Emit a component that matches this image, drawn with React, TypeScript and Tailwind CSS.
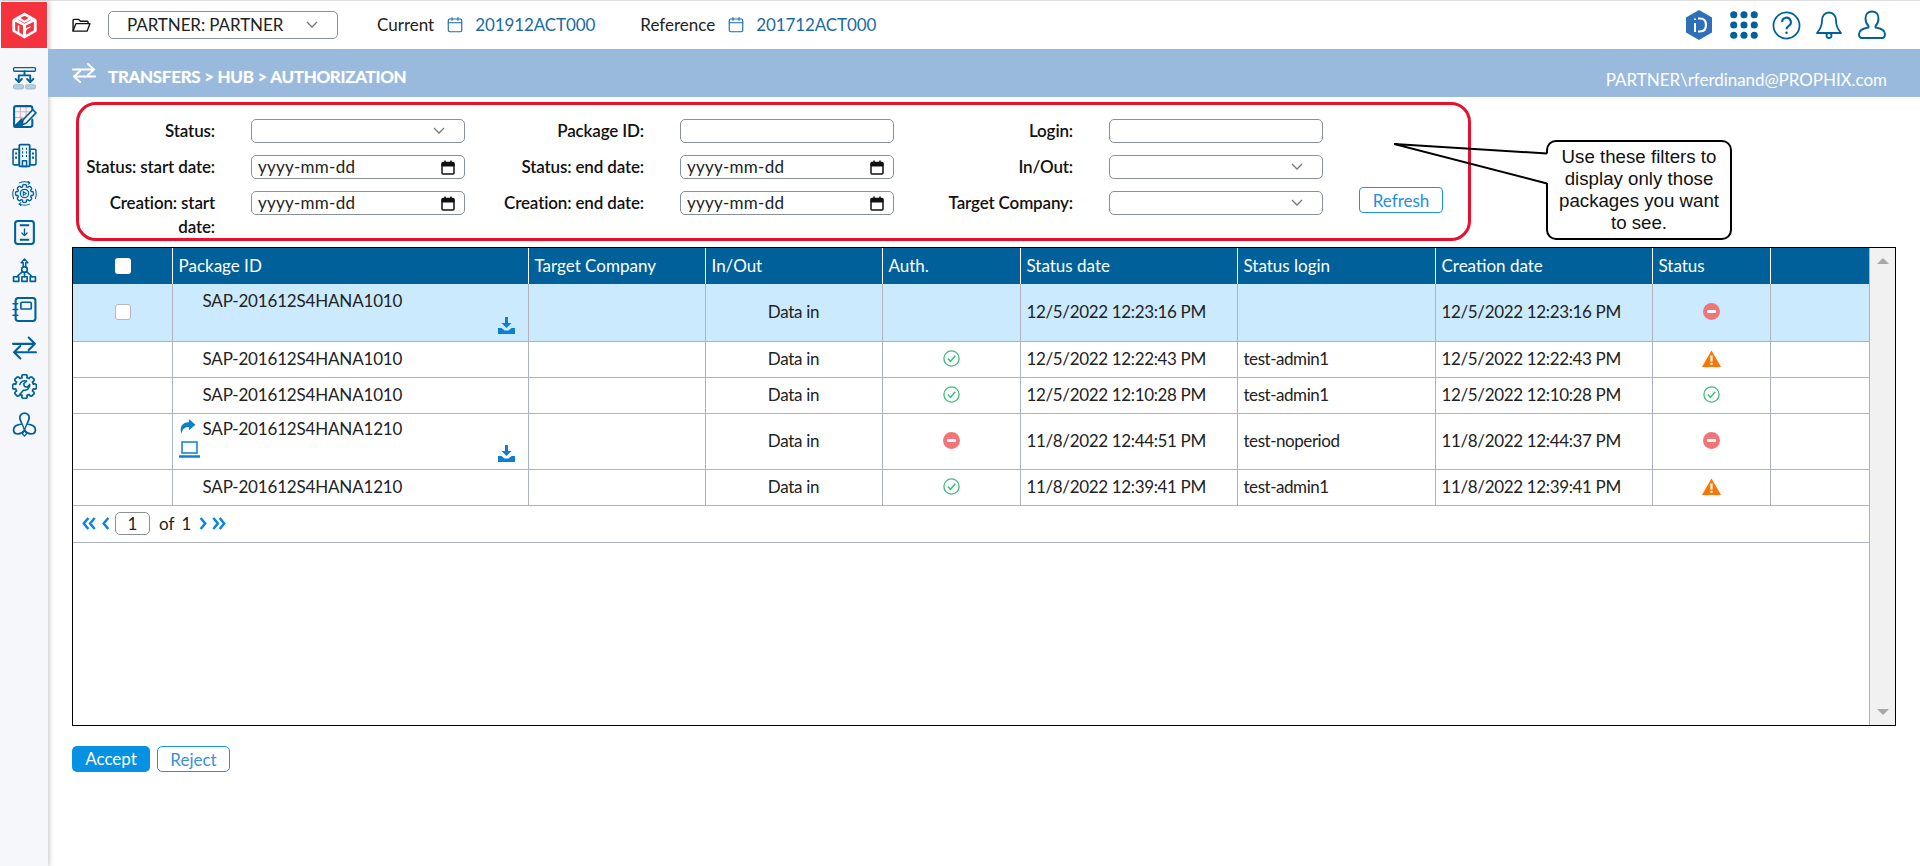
import React from "react";

const lato = { fontFamily: "Lato, 'Liberation Sans', sans-serif" };

function Svg({ className, children }: { className?: string; children: React.ReactNode }) {
  return (
    <svg viewBox="0 0 24 24" fill="none" stroke="currentColor" strokeWidth="1.5" strokeLinecap="round" strokeLinejoin="round" className={className}>
      {children}
    </svg>
  );
}

// outline of a cog, used by the two gear icons of the side bar
function gearPath(cx: number, cy: number, outer: number, inner: number, teeth: number) {
  const pts: string[] = [];
  const step = (Math.PI * 2) / teeth;
  for (let i = 0; i < teeth; i++) {
    const a = i * step - Math.PI / 2;
    const at = (r: number, t: number) => `${(cx + r * Math.cos(a + t * step)).toFixed(2)} ${(cy + r * Math.sin(a + t * step)).toFixed(2)}`;
    pts.push(`${i === 0 ? "M" : "L"}${at(inner, -0.34)}`, `Q${at(outer, -0.34)} ${at(outer, -0.12)}`, `L${at(outer, 0.12)}`, `Q${at(outer, 0.34)} ${at(inner, 0.34)}`);
  }
  return pts.join(" ") + "z";
}

const sideIcons: React.ReactNode[] = [
  <>
    <rect x="1.500" y="1.500" width="21" height="3.500" rx="1" strokeWidth="1.300" />
    <path d="M12 5v4M6.500 9h11M6.500 9v6.500M17.500 9v6.500" strokeWidth="1.800" />
    <path d="M3.500 12.500l3 3 3-3M14.500 12.500l3 3 3-3" strokeWidth="1.800" />
    <rect x="1.500" y="18" width="9.500" height="4" rx="1.500" fill="#b7cfdf" stroke="#9db9cc" strokeWidth="1" />
    <rect x="13" y="18" width="9.500" height="4" rx="1.500" fill="#b7cfdf" stroke="#9db9cc" strokeWidth="1" />
  </>,
  <>
    <path d="M8 2v20M13.500 2v9M2 7.500h16M2 13h9" stroke="#e3a9b0" strokeWidth="1" strokeLinecap="butt" />
    <path d="M19.500 7V4a2 2 0 0 0-2-2H4a2 2 0 0 0-2 2v16a2 2 0 0 0 2 2h13.500a2 2 0 0 0 2-2v-5" strokeWidth="2" />
    <path d="M2 22l7.500-7.500V22z" fill="currentColor" />
    <path d="M9.500 20l1.200-5L20 5.500l3 3L13.500 18.500z" fill="#f6f7fb" strokeWidth="1.600" />
  </>,
  <>
    <rect x="7" y="1.500" width="10" height="21" rx="1" strokeWidth="1.700" />
    <rect x="1" y="6" width="6" height="15" rx="1" strokeWidth="1.500" />
    <rect x="17" y="6" width="6" height="15" rx="1" strokeWidth="1.500" />
    <path d="M10 17h4v5.500h-4z" />
    <path d="M9.500 5.500h1.200M13.300 5.500h1.200M9.500 9h1.200M13.300 9h1.200M9.500 12.500h1.200M13.300 12.500h1.200M3 10h1.800M3 14h1.800M19.200 10H21M19.200 14H21" strokeWidth="2" strokeLinecap="butt" />
  </>,
  <>
    <path d={gearPath(12, 12, 8.600, 6.700, 8)} strokeWidth="1.300" />
    <circle cx="12" cy="12" r="4" strokeWidth="1.200" />
    <path d="M10.800 10.200l3 1.800-3 1.800z" strokeWidth="1" />
    <path d="M7 1.800c3-1.200 7-1.200 10 0M22.500 8c1 3 1 6 0 9M1.500 8c-1 3-1 6 0 9M7 22.200c3 1.200 7 1.200 10 0M15.500 .5l1.800 1.300-1.800 1.300M8.500 20.900l-1.800 1.300 1.800 1.300" strokeWidth="1" />
  </>,
  <>
    <rect x="3" y="1" width="18" height="22" rx="2.500" strokeWidth="2" />
    <path d="M7.500 5h9M7.500 19h9" strokeWidth="2" strokeLinecap="butt" />
    <path d="M12 8.500v6M9.500 12.500l2.500 2.500 2.500-2.500" strokeWidth="1.300" />
  </>,
  <>
    <path d="M12 1L8.800 4.500h2V8.500h2.400V4.500h2z" strokeWidth="1.400" />
    <circle cx="12" cy="11" r="2.700" strokeWidth="1.600" />
    <path d="M12 13.700V18M10 13L4.500 18M14 13l5.500 5" strokeWidth="1.600" />
    <rect x="1.500" y="18" width="5" height="4.500" strokeWidth="1.600" />
    <rect x="9.500" y="18" width="5" height="4.500" strokeWidth="1.600" />
    <rect x="17.500" y="18" width="5" height="4.500" strokeWidth="1.600" />
  </>,
  <>
    <rect x="3.500" y="1" width="19" height="22" rx="2.500" strokeWidth="2" />
    <rect x="8.500" y="5" width="10" height="6.500" rx="1" strokeWidth="1.600" />
    <path d="M1 6.500h4.500M1 12h4.500M1 17.500h4.500" strokeWidth="1.500" />
  </>,
  <>
    <path d="M1 8.500h21M16 2.500l6 6-6 6M23 16.500H2M8 10.500l-6 6 6 6" strokeWidth="2" />
  </>,
  <>
    <path d={gearPath(12, 12, 11.500, 8.800, 8)} strokeWidth="1.700" />
    <path d="M7.500 10a5 5 0 0 1 6.500-3.200l-2.800 2.600.8 2.600 2.600.8L17 10a5 5 0 0 1-6 5.500l-3 3.500" strokeWidth="1.500" />
  </>,
  <>
    <path d="M12 1a4.500 4.500 0 0 0-4.500 4.500c0 2.500 1.500 4 2 6-3.500.5-8 2-8 5.700 0 2.500 2 3.800 4.500 3.800 2 0 4-1 6-3.500 2 2.500 4 3.500 6 3.500 2.500 0 4.500-1.300 4.500-3.800 0-3.700-4.500-5.200-8-5.700.5-2 2-3.500 2-6A4.500 4.500 0 0 0 12 1z" strokeWidth="1.700" />
    <path d="M10 12l2 5.500L14 12M12 17.500l-2 3.500 2 2 2-2z" strokeWidth="1.300" />
  </>,
];

function CalendarOutline() {
  return (
    <Svg className="w-[18px] h-[18px] text-[#1a6aa5]">
      <rect x="3" y="4" width="18" height="17" rx="2" />
      <path d="M3 9h18M8 2v3.500M16 2v3.500" />
    </Svg>
  );
}

function Chevron() {
  return (
    <svg viewBox="0 0 12 8" className="w-[12px] h-[8px] text-[#777]" fill="none" stroke="currentColor" strokeWidth="1.300">
      <path d="M1 1l5 5 5-5" />
    </svg>
  );
}

function FilterSelect() {
  return (
    <div className="h-6 rounded-[5px] border border-[#8a8f9c] bg-white flex items-center justify-end pr-[19px]">
      <Chevron />
    </div>
  );
}

function FilterInput() {
  return <div className="h-6 rounded-[5px] border border-[#8a8f9c] bg-white" />;
}

function FilterDate() {
  return (
    <div className="h-6 rounded-[5px] border border-[#8a8f9c] bg-white flex items-center justify-between pl-[6px] pr-[9px] text-[#222] tracking-[0.25px]">
      <span className="-mt-px">yyyy-mm-dd</span>
      <svg viewBox="0 0 14 15" className="w-[14px] h-[15px]" fill="none" stroke="#111">
        <rect x="1" y="2.500" width="12" height="11.500" rx="1" strokeWidth="1.500" />
        <path d="M1 3.500h12v2.500H1z" fill="#111" />
        <path d="M4 0.500v2M10 0.500v2" strokeWidth="1.500" />
      </svg>
    </div>
  );
}

function Label({ children }: { children: React.ReactNode }) {
  return <div className="text-right font-semibold text-[#111] tracking-[-0.15px] leading-6">{children}</div>;
}

function Download() {
  return (
    <svg viewBox="0 0 17 17" className="w-[17px] h-[17px] text-[#0b7fd0]" fill="currentColor">
      <path d="M7 0h3v6h3.500L8.500 11 3.500 6H7z" />
      <path d="M0 11h3.500l3 2.500h4l3-2.500H17v6H0z" />
    </svg>
  );
}

function CheckOk() {
  return (
    <svg viewBox="0 0 17 17" className="w-[17px] h-[17px] mx-auto -mt-[2px] block" fill="none" stroke="#3dbb78" strokeWidth="1.300">
      <circle cx="8.500" cy="8.500" r="7.600" />
      <path d="M4.800 8.600l2.700 2.800 4.700-5.600" strokeWidth="1.500" />
    </svg>
  );
}

function Stop() {
  return (
    <svg viewBox="0 0 17 17" className="w-[17px] h-[17px] mx-auto -mt-[2px] block">
      <circle cx="8.500" cy="8.500" r="8.500" fill="#f07478" />
      <rect x="4" y="7" width="9" height="3" rx="1" fill="#fff" />
    </svg>
  );
}

function Warn() {
  return (
    <svg viewBox="0 0 19 17" className="w-[19px] h-[17px] mx-auto -mt-[2px] block">
      <path d="M9.500 0.500L19 17H0z" fill="#ff7300" />
      <rect x="8.400" y="5.500" width="2.200" height="6" fill="#fff" />
      <rect x="8.400" y="12.800" width="2.200" height="2.200" fill="#fff" />
    </svg>
  );
}

type Row = {
  height: string;
  check?: boolean;
  mine?: boolean;
  id: string;
  auth?: "ok" | "stop";
  statusDate: string;
  login: string;
  created: string;
  status: "ok" | "stop" | "warn";
  selected?: boolean;
};

const rows: Row[] = [
  { height: "h-[57px]", check: true, selected: true, id: "SAP-201612S4HANA1010", statusDate: "12/5/2022 12:23:16 PM", login: "", created: "12/5/2022 12:23:16 PM", status: "stop" },
  { height: "h-[36px]", id: "SAP-201612S4HANA1010", auth: "ok", statusDate: "12/5/2022 12:22:43 PM", login: "test-admin1", created: "12/5/2022 12:22:43 PM", status: "warn" },
  { height: "h-[36px]", id: "SAP-201612S4HANA1010", auth: "ok", statusDate: "12/5/2022 12:10:28 PM", login: "test-admin1", created: "12/5/2022 12:10:28 PM", status: "ok" },
  { height: "h-[56px]", mine: true, id: "SAP-201612S4HANA1210", auth: "stop", statusDate: "11/8/2022 12:44:51 PM", login: "test-noperiod", created: "11/8/2022 12:44:37 PM", status: "stop" },
  { height: "h-[36px]", id: "SAP-201612S4HANA1210", auth: "ok", statusDate: "11/8/2022 12:39:41 PM", login: "test-admin1", created: "11/8/2022 12:39:41 PM", status: "warn" },
];

function StatusIcon({ s }: { s?: "ok" | "stop" | "warn" }) {
  if (s === "ok") return <CheckOk />;
  if (s === "stop") return <Stop />;
  if (s === "warn") return <Warn />;
  return null;
}

const headers = ["Package ID", "Target Company", "In/Out", "Auth.", "Status date", "Status login", "Creation date", "Status", ""];
const td = "border-r border-b border-[#aeb1bf] px-[6px] align-middle";

function Pager() {
  return (
    <div className="h-[37px] flex items-center pl-[9px] text-[#222] border-b border-[#aeb1bf]">
      <svg viewBox="0 0 32 14" className="w-[29px] h-[13px] text-[#0b86dc]" fill="none" stroke="currentColor" strokeWidth="2.800">
        <path d="M7 1L2 7l5 6M14 1L9 7l5 6M29 1l-5 6 5 6" />
      </svg>
      <div className="w-[35px] h-[23px] ml-[4px] rounded-[5px] border border-[#8a8f9c] flex items-center justify-center">1</div>
      <span className="ml-[9px]">of</span>
      <span className="ml-[7px]">1</span>
      <svg viewBox="0 0 32 14" className="w-[29px] h-[13px] ml-[6px] text-[#0b86dc]" fill="none" stroke="currentColor" strokeWidth="2.800">
        <path d="M4 1l5 6-5 6M18 1l5 6-5 6M25 1l5 6-5 6" />
      </svg>
    </div>
  );
}

export default function App() {
  return (
    <div className="relative w-[1920px] h-[866px] overflow-hidden bg-white text-[17px]" style={lato}>
      <div className="h-px bg-[#dfdfdf]" />
      <div className="flex h-[865px]">
        <aside className="w-[48px] shrink-0 bg-[#f6f7fb] shadow-[2px_0_4px_rgba(0,0,0,0.18)]">
          <div className="ml-px mt-px w-[46px] h-[46px] bg-[#f4333f] flex items-center justify-center">
            <svg viewBox="0 0 24 26" className="w-[25px] h-[27px]" fill="#fff">
              <path d="M12 .5l10.500 6c.8.5 1.200 1 1.200 2v9c0 1-.4 1.500-1.200 2l-10.500 6-10.500-6C.7 19 .3 18.500.3 17.500v-9c0-1 .4-1.500 1.200-2z" />
              <path d="M12 3.500L8 5.800l4 2.400 4-2.400zM6 7.200l-.5.300 6.500 3.700 6.500-3.700-.5-.300-6 3.400z" fill="#f4333f" />
              <path d="M3 9.500v8l2.500 1.400v-5.400c0-1 1.500-1 1.500 0v6.300l3.500 2V13zM21 9.500v8l-7.500 4.300V18.500c0-1 1-2 2.500-2.600 1.500-.7 2-1 2-2.400-2 1-3.500 1.500-4.500 2.400V13z" fill="#f4333f" />
            </svg>
          </div>
          <div className="mt-[11px] flex flex-col items-center text-[#00619a]">
            {sideIcons.map((icon, i) => (
              <div key={i} className="h-[38.500px] flex items-center justify-center">
                <Svg className="w-[25px] h-[25px]">{icon}</Svg>
              </div>
            ))}
          </div>
        </aside>

        <main className="flex-1 min-w-0">
          <header className="h-[48px] flex items-center pl-6 pr-[33px] text-[#222]">
            <svg viewBox="0 0 20 16" className="w-[19px] h-[15px]" fill="none" stroke="#111" strokeWidth="1.500" strokeLinejoin="round">
              <path d="M1 14V2.500a1 1 0 0 1 1-1h5l2 2h7a1 1 0 0 1 1 1V6" />
              <path d="M1 14l3-8h15l-3 8z" />
            </svg>
            <div className="ml-[17px] w-[230px] h-[28px] rounded-[5px] border border-[#8a8f9c] flex items-center justify-between pl-[18px] pr-[19px] tracking-[-0.1px]">
              <span>PARTNER: PARTNER</span>
              <Chevron />
            </div>
            <span className="ml-[39px]">Current</span>
            <span className="ml-[12px]"><CalendarOutline /></span>
            <span className="ml-[11px] text-[#1a6aa5] tracking-[-0.1px]">201912ACT000</span>
            <span className="ml-[45px]">Reference</span>
            <span className="ml-[12px]"><CalendarOutline /></span>
            <span className="ml-[11px] text-[#1a6aa5] tracking-[-0.1px]">201712ACT000</span>

            <div className="ml-auto flex items-center text-[#00619a]">
              <svg viewBox="0 0 26 30" className="w-[26px] h-[30px]">
                <path d="M13 0l13 7.500v15L13 30 0 22.500v-15z" fill="#2d6fb8" />
                <path d="M9 13v9M9 8.500v1.500" stroke="#fff" strokeWidth="2" fill="none" />
                <path d="M12 8.500h2c4 0 6 2.500 6 6.500s-2 6.500-6 6.500h-2" stroke="#fff" strokeWidth="2.200" fill="none" />
              </svg>
              <svg viewBox="0 0 30 30" className="ml-[18px] w-[28px] h-[28px]" fill="currentColor">
                {[4, 15, 26].map((y) => [4, 15, 26].map((x) => <circle key={`${x}-${y}`} cx={x} cy={y} r="3.800" />))}
              </svg>
              <svg viewBox="0 0 30 30" className="ml-[14px] w-[29px] h-[29px]" fill="none" stroke="currentColor" strokeWidth="1.800">
                <circle cx="15" cy="15" r="13.500" />
                <path d="M10.500 11.500a4.500 4.500 0 1 1 6.800 3.800c-1.500 1-2.300 1.700-2.300 3.700" strokeWidth="2.200" />
                <circle cx="15" cy="22.500" r="1.300" fill="currentColor" stroke="none" />
              </svg>
              <svg viewBox="0 0 28 28" className="ml-[14px] w-[28px] h-[28px]" fill="none" stroke="currentColor" strokeWidth="1.800" strokeLinejoin="round">
                <path d="M14 1.500c-4.500 0-7 3.500-7 8 0 6-2 9-5 12.500h24c-3-3.500-5-6.500-5-12.500 0-4.500-2.500-8-7-8z" />
                <circle cx="14" cy="24.500" r="2.500" />
              </svg>
              <svg viewBox="0 0 30 30" className="ml-[14px] w-[30px] h-[30px]" fill="none" stroke="currentColor" strokeWidth="1.900" strokeLinejoin="round">
                <path d="M15 1.500c-4 0-6.500 3-6.500 7 0 3 1 5.500 3 7.500v1.500c-1 .5-9 .5-9.500 6.500 0 2.500 1 4 3 4h20c2 0 3-1.500 3-4-.5-6-8.500-6-9.500-6.500V16c2-2 3-4.500 3-7.500 0-4-2.500-7-6.500-7z" />
              </svg>
            </div>
          </header>

          <div className="h-[48px] bg-[#9abadd] flex items-end pl-6 pr-[33px] text-white">
            <svg viewBox="0 0 24 20" className="w-[24px] h-[20px] mb-[14px]" fill="none" stroke="currentColor" strokeWidth="2" strokeLinecap="round" strokeLinejoin="round">
              <path d="M1 6.500h21M16 1l6 5.500-6 5.500M23 13.500H2M8 8l-6 5.500L8 19" />
            </svg>
            <span className="ml-3 pb-2 font-bold tracking-[-0.3px] leading-6 [text-shadow:0_0_1px_rgba(255,255,255,0.5)]">TRANSFERS &gt; HUB &gt; AUTHORIZATION</span>
            <span className="ml-auto pb-[5px] leading-6 tracking-[-0.05px]">PARTNER\rferdinand@PROPHIX.com</span>
          </div>

          <div className="mt-[5px] ml-7 w-[1395px] h-[139px] border-[3px] border-[#e8112d] rounded-[20px] pt-[14px]">
            <div className="grid grid-cols-[136px_214px_143px_214px_143px_214px_84px] gap-x-[36px] gap-y-3 items-start">
              <Label>Status:</Label>
              <FilterSelect />
              <Label>Package ID:</Label>
              <FilterInput />
              <Label>Login:</Label>
              <FilterInput />
              <div />
              <Label>Status: start date:</Label>
              <FilterDate />
              <Label>Status: end date:</Label>
              <FilterDate />
              <Label>In/Out:</Label>
              <FilterSelect />
              <div />
              <Label>Creation: start date:</Label>
              <FilterDate />
              <Label>Creation: end date:</Label>
              <FilterDate />
              <Label>Target Company:</Label>
              <FilterSelect />
              <button className="-mt-1 h-[26px] rounded-[4px] border border-[#1e93e4] text-[#1e8fe0] bg-white">Refresh</button>
            </div>
          </div>

          <div className="mt-[6px] ml-6 w-[1824px] h-[479px] border border-black flex">
            <div className="flex-1 min-w-0 border-r border-[#aeb1bf]">
              <table className="w-full table-fixed border-collapse text-[#222]">
                <colgroup>
                  <col className="w-[99px]" />
                  <col className="w-[356px]" />
                  <col className="w-[177px]" />
                  <col className="w-[177px]" />
                  <col className="w-[138px]" />
                  <col className="w-[217px]" />
                  <col className="w-[198px]" />
                  <col className="w-[217px]" />
                  <col className="w-[118px]" />
                  <col />
                </colgroup>
                <thead>
                  <tr className="h-[36px] bg-[#00619a] text-white text-left">
                    <th className="border-r border-white text-center align-middle pl-0.5">
                      <input type="checkbox" className="appearance-none block mx-auto w-4 h-4 rounded-[3px] bg-white" />
                    </th>
                    {headers.map((h, i) => (
                      <th key={i} className="font-normal px-[6px] border-r border-white last:border-r-0 leading-[22px]">{h}</th>
                    ))}
                  </tr>
                </thead>
                <tbody>
                  {rows.map((r, i) => (
                    <tr key={i} className={`${r.height} ${r.selected ? "bg-[#cbeafe]" : ""} leading-[22px]`}>
                      <td className="border-b border-r border-[#aeb1bf] text-center pl-0.5">
                        {r.check && <input type="checkbox" className="appearance-none block mx-auto w-4 h-4 rounded-[3px] bg-white border border-[#b5b8c4]" />}
                      </td>
                      <td className={`${td} align-top`}>
                        <div className={`flex items-center tracking-[-0.18px] ${r.mine ? "h-[30px]" : "h-[34px]"}`}>
                          <div className="w-[24px] shrink-0">
                            {r.mine && (
                              <svg viewBox="0 0 17 16" className="w-[17px] h-[15px] -mt-1 text-[#0b7fd0]" fill="currentColor">
                                <path d="M10 0l7 6-7 6V8.500C6 8.500 3 10 2 16 0 9 2 4 10 3.500z" />
                              </svg>
                            )}
                          </div>
                          <span>{r.id}</span>
                        </div>
                        {r.check && (
                          <div className="flex justify-end h-[20px] -mt-px">
                            <span className="mr-[7px]"><Download /></span>
                          </div>
                        )}
                        {r.mine && (
                          <div className="flex justify-between items-start h-[22px]">
                            <svg viewBox="0 0 21 17" className="w-[21px] h-[17px] -mt-[3px] text-[#0b7fd0]" fill="none" stroke="currentColor" strokeWidth="1.500">
                              <rect x="3" y="1" width="15" height="11" />
                              <path d="M0 15.500h21" strokeWidth="2.500" />
                            </svg>
                            <span className="mr-[7px] mt-px"><Download /></span>
                          </div>
                        )}
                      </td>
                      <td className={td} />
                      <td className={`${td} text-center tracking-[-0.3px]`}>Data in</td>
                      <td className={td}><StatusIcon s={r.auth} /></td>
                      <td className={`${td} tracking-[-0.35px]`}>{r.statusDate}</td>
                      <td className={`${td} tracking-[-0.45px]`}>{r.login}</td>
                      <td className={`${td} tracking-[-0.35px]`}>{r.created}</td>
                      <td className={td}><StatusIcon s={r.status} /></td>
                      <td className={`${td} border-r-0`} />
                    </tr>
                  ))}
                </tbody>
              </table>
              <Pager />
            </div>
            <div className="w-[25px] shrink-0 bg-[#f1f1f1] flex flex-col items-center justify-between py-[10px]">
              <div className="w-0 h-0 border-x-[6px] border-x-transparent border-b-[6px] border-b-[#a8a8a8]" />
              <div className="w-0 h-0 border-x-[6px] border-x-transparent border-t-[6px] border-t-[#a8a8a8]" />
            </div>
          </div>

          <div className="mt-5 ml-6 flex gap-[7px]">
            <button className="w-[78px] h-[26px] rounded-[5px] bg-[#0791e2] text-white">Accept</button>
            <button className="w-[73px] h-[26px] rounded-[5px] border border-[#1e93e4] text-[#3b8fe0] bg-white">Reject</button>
          </div>
        </main>
      </div>

      {/* callout over the filter box */}
      <div className="absolute left-[1546px] top-[140px] w-[186px] h-[100px] bg-white border-2 border-black rounded-[10px] flex flex-col justify-center text-center text-[18.700px] leading-[22px] text-[#111]" style={{ fontFamily: "'Liberation Sans', Arial, sans-serif" }}>
        <div>Use these filters to</div>
        <div>display only those</div>
        <div>packages you want</div>
        <div>to see.</div>
      </div>
      <svg className="absolute left-[1394px] top-[140px] w-[156px] h-[50px]" viewBox="0 0 156 50" fill="none">
        <path d="M153 13.500V43" stroke="#fff" strokeWidth="3" />
        <path d="M0 4L153 13.500M0 4L153 43.500" stroke="#000" strokeWidth="2" />
      </svg>
    </div>
  );
}
